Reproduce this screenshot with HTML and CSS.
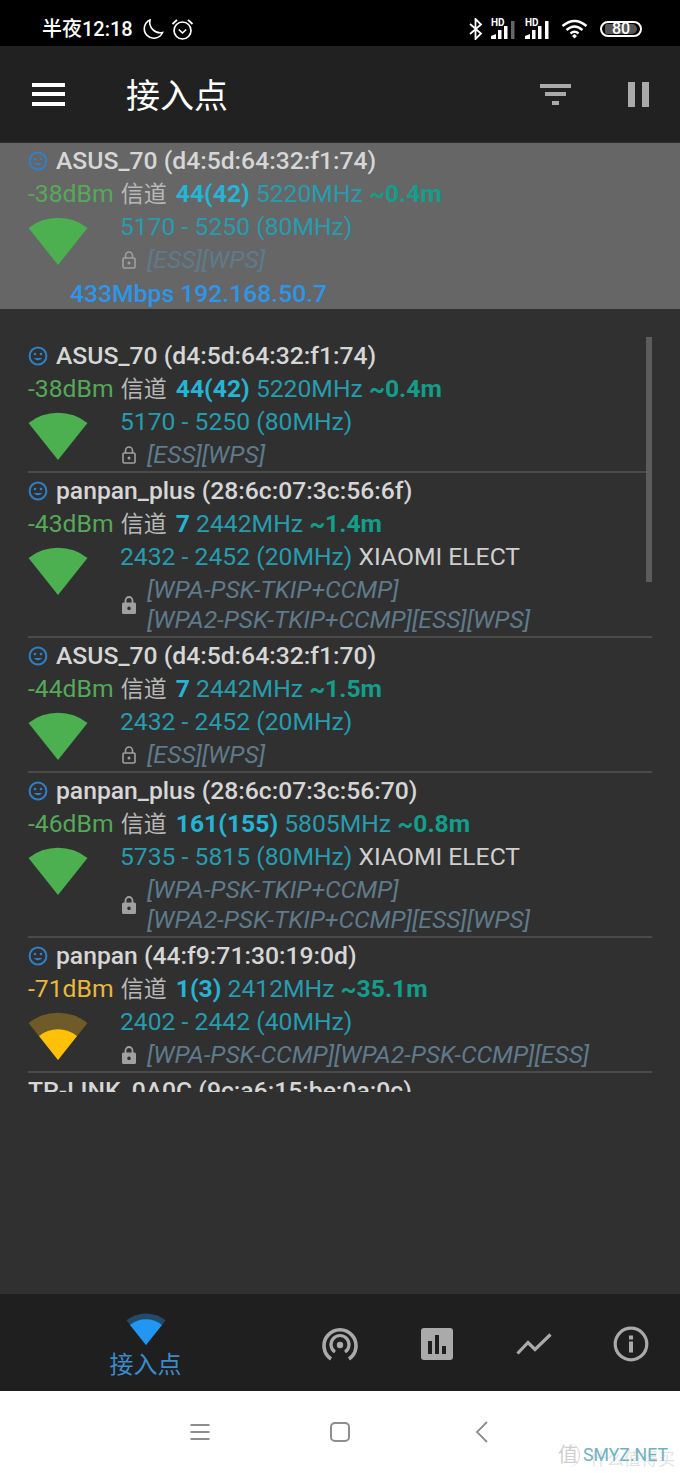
FILE: index.html
```html
<!DOCTYPE html>
<html lang="zh-CN">
<head>
    <meta charset="UTF-8">
    <meta name="viewport" content="width=device-width, initial-scale=1.0">
    <title>接入点</title>
    <link rel="stylesheet" href="styles.css">
</head>
<body>
    <!-- shared icons -->
    <svg class="defs" width="0" height="0">
        <symbol id="face" viewBox="0 0 20 20">
            <circle cx="10" cy="10" r="8.4" fill="none" stroke="currentColor" stroke-width="2"/>
            <circle cx="7" cy="8" r="1.3" fill="currentColor"/>
            <circle cx="13" cy="8" r="1.3" fill="currentColor"/>
            <path d="M5.8 12 Q10 16.4 14.2 12 Z" fill="currentColor"/>
        </symbol>
        <symbol id="wedge-full" viewBox="0 0 60 48">
            <path d="M0.5 11 A47.5 47.5 0 0 1 59.5 11 L30 48 Z" fill="#4caf50"/>
        </symbol>
        <symbol id="wedge-low" viewBox="0 0 60 48">
            <path d="M0.5 11 A47.5 47.5 0 0 1 59.5 11 L30 48 Z" fill="#6e5b27"/>
            <path d="M11 24 A30.500 30.500 0 0 1 49 24 L30 48 Z" fill="#ffc107"/>
        </symbol>
        <symbol id="lock-open" viewBox="0 0 14 18">
            <path d="M3.500 7 V4.500 a3.500 3.500 0 0 1 7 0 V7" fill="none" stroke="currentColor" stroke-width="1.600"/>
            <rect x="1" y="7" width="12" height="10" rx="1.200" fill="none" stroke="currentColor" stroke-width="1.600"/>
            <circle cx="7" cy="12" r="1.500" fill="currentColor"/>
        </symbol>
        <symbol id="lock-solid" viewBox="0 0 14 18">
            <path d="M3.500 7 V4.500 a3.500 3.500 0 0 1 7 0 V7" fill="none" stroke="currentColor" stroke-width="1.800"/>
            <path fill-rule="evenodd" d="M1.500 6.500 h11 a1.500 1.500 0 0 1 1.500 1.500 v8.500 a1.500 1.500 0 0 1 -1.500 1.500 h-11 a1.500 1.500 0 0 1 -1.500 -1.500 v-8.500 a1.500 1.500 0 0 1 1.500 -1.500 Z M7 10.500 a1.800 1.800 0 1 0 0.010 0 Z" fill="currentColor"/>
        </symbol>
    </svg>

    <div class="status-bar">
        <span class="clock">半夜12:18</span>
        <svg class="st-moon" width="22" height="22" viewBox="0 0 22 22"><path d="M8 2 A9.500 9.500 0 1 0 20.500 14.500 A10.500 10.500 0 0 1 8 2 Z" fill="none" stroke="#fff" stroke-width="1.600"/></svg>
        <svg class="st-alarm" width="23" height="23" viewBox="0 0 23 23"><circle cx="11.500" cy="12.500" r="8.500" fill="none" stroke="#fff" stroke-width="1.700"/><path d="M7.800 11.500 L11.500 15 L15.200 11.500" fill="none" stroke="#fff" stroke-width="1.600"/><path d="M1.500 6 L6 1.800 M21.500 6 L17 1.800" stroke="#fff" stroke-width="1.800"/></svg>
        <div class="status-right">
            <svg width="14" height="22" viewBox="0 0 14 22"><path d="M1 6 L12 15.500 L6.500 21 V1 L12 6.500 L1 16" fill="none" stroke="#fff" stroke-width="1.800"/></svg>
            <div class="sim">
                <span class="hd">HD</span>
                <svg width="26" height="19" viewBox="0 0 26 19"><path d="M0 19 V16 L5 14 V19 Z" fill="#fff"/><rect x="7" y="10" width="3.500" height="9" fill="#fff"/><rect x="13" y="6" width="3.500" height="13" fill="#fff"/><rect x="20" y="1" width="3.500" height="18" fill="#666"/></svg>
            </div>
            <div class="sim">
                <span class="hd">HD</span>
                <svg width="26" height="19" viewBox="0 0 26 19"><path d="M0 19 V16 L5 14 V19 Z" fill="#fff"/><rect x="7" y="10" width="3.500" height="9" fill="#fff"/><rect x="13" y="6" width="3.500" height="13" fill="#fff"/><rect x="20" y="1" width="3.500" height="18" fill="#fff"/></svg>
            </div>
            <svg class="st-wifi" width="27" height="20" viewBox="0 0 27 20"><path d="M1.500 7 Q13.500 -3 25.500 7 M5.500 11 Q13.500 4 21.500 11 M9.500 14.500 Q13.500 11 17.500 14.500" fill="none" stroke="#fff" stroke-width="2.400"/><path d="M11 17 L13.500 15 L16 17 L13.500 19.500 Z" fill="#fff"/></svg>
            <div class="battery"><span class="battery-fill">80</span></div>
        </div>
    </div>

    <header class="toolbar">
        <div class="hamburger"><i></i><i></i><i></i></div>
        <h1>接入点</h1>
        <div class="filter"><i></i><i></i><i></i></div>
        <div class="pause"><i></i><i></i></div>
    </header>

    <main class="content">
        <!-- connected network -->
        <section class="ap connected">
            <div class="ap-title"><svg class="face"><use href="#face"/></svg>ASUS_70 (d4:5d:64:32:f1:74)</div>
            <div class="ap-line"><span class="good">-38dBm</span> <span class="cn">信道</span> <b class="chan">44(42)</b> <span class="freq">5220MHz</span> <b class="dist">~0.4m</b></div>
            <div class="ap-body">
                <svg class="wedge"><use href="#wedge-full"/></svg>
                <div>
                    <div class="range">5170 - 5250 (80MHz)</div>
                    <div class="sec"><svg class="lock"><use href="#lock-open"/></svg><div class="caps">[ESS][WPS]</div></div>
                </div>
            </div>
            <div class="link">433Mbps 192.168.50.7</div>
        </section>

        <div class="scroll-thumb"></div>

        <div class="list">
            <section class="ap">
                <div class="ap-title"><svg class="face"><use href="#face"/></svg>ASUS_70 (d4:5d:64:32:f1:74)</div>
                <div class="ap-line"><span class="good">-38dBm</span> <span class="cn">信道</span> <b class="chan">44(42)</b> <span class="freq">5220MHz</span> <b class="dist">~0.4m</b></div>
                <div class="ap-body">
                    <svg class="wedge"><use href="#wedge-full"/></svg>
                    <div>
                        <div class="range">5170 - 5250 (80MHz)</div>
                        <div class="sec"><svg class="lock"><use href="#lock-open"/></svg><div class="caps">[ESS][WPS]</div></div>
                    </div>
                </div>
            </section>

            <section class="ap">
                <div class="ap-title"><svg class="face"><use href="#face"/></svg>panpan_plus (28:6c:07:3c:56:6f)</div>
                <div class="ap-line"><span class="good">-43dBm</span> <span class="cn">信道</span> <b class="chan">7</b> <span class="freq">2442MHz</span> <b class="dist">~1.4m</b></div>
                <div class="ap-body">
                    <svg class="wedge"><use href="#wedge-full"/></svg>
                    <div>
                        <div class="range">2432 - 2452 (20MHz) <span class="vendor">XIAOMI ELECT</span></div>
                        <div class="sec two"><svg class="lock"><use href="#lock-solid"/></svg><div class="caps">[WPA-PSK-TKIP+CCMP]<br>[WPA2-PSK-TKIP+CCMP][ESS][WPS]</div></div>
                    </div>
                </div>
            </section>

            <section class="ap">
                <div class="ap-title"><svg class="face"><use href="#face"/></svg>ASUS_70 (d4:5d:64:32:f1:70)</div>
                <div class="ap-line"><span class="good">-44dBm</span> <span class="cn">信道</span> <b class="chan">7</b> <span class="freq">2442MHz</span> <b class="dist">~1.5m</b></div>
                <div class="ap-body">
                    <svg class="wedge"><use href="#wedge-full"/></svg>
                    <div>
                        <div class="range">2432 - 2452 (20MHz)</div>
                        <div class="sec"><svg class="lock"><use href="#lock-open"/></svg><div class="caps">[ESS][WPS]</div></div>
                    </div>
                </div>
            </section>

            <section class="ap">
                <div class="ap-title"><svg class="face"><use href="#face"/></svg>panpan_plus (28:6c:07:3c:56:70)</div>
                <div class="ap-line"><span class="good">-46dBm</span> <span class="cn">信道</span> <b class="chan">161(155)</b> <span class="freq">5805MHz</span> <b class="dist">~0.8m</b></div>
                <div class="ap-body">
                    <svg class="wedge"><use href="#wedge-full"/></svg>
                    <div>
                        <div class="range">5735 - 5815 (80MHz) <span class="vendor">XIAOMI ELECT</span></div>
                        <div class="sec two"><svg class="lock"><use href="#lock-solid"/></svg><div class="caps">[WPA-PSK-TKIP+CCMP]<br>[WPA2-PSK-TKIP+CCMP][ESS][WPS]</div></div>
                    </div>
                </div>
            </section>

            <section class="ap">
                <div class="ap-title"><svg class="face"><use href="#face"/></svg>panpan (44:f9:71:30:19:0d)</div>
                <div class="ap-line"><span class="fair">-71dBm</span> <span class="cn">信道</span> <b class="chan">1(3)</b> <span class="freq">2412MHz</span> <b class="dist">~35.1m</b></div>
                <div class="ap-body">
                    <svg class="wedge"><use href="#wedge-low"/></svg>
                    <div>
                        <div class="range">2402 - 2442 (40MHz)</div>
                        <div class="sec"><svg class="lock"><use href="#lock-solid"/></svg><div class="caps">[WPA-PSK-CCMP][WPA2-PSK-CCMP][ESS]</div></div>
                    </div>
                </div>
            </section>

            <section class="ap">
                <div class="ap-title">TP-LINK_0A0C (9c:a6:15:be:0a:0c)</div>
            </section>
        </div>
    </main>

    <nav class="bottom-nav">
        <div class="tab active">
            <svg width="40" height="32" viewBox="0 0 60 48"><path d="M0.500 11 A47.500 47.500 0 0 1 59.500 11 L30 48 Z" fill="#24496b"/><path d="M6 18 A38 38 0 0 1 54 18 L30 48 Z" fill="#2196f3"/></svg>
            <span>接入点</span>
        </div>
        <div class="tab">
            <svg width="36" height="34" viewBox="0 0 36 34"><path d="M9 32 A16 16 0 1 1 27 32" fill="none" stroke="#aaa" stroke-width="3.600"/><path d="M13 25 A9 9 0 1 1 23 25" fill="none" stroke="#aaa" stroke-width="3.200"/><circle cx="18" cy="18" r="3.200" fill="#aaa"/></svg>
        </div>
        <div class="tab">
            <svg width="32" height="32" viewBox="0 0 32 32"><rect width="32" height="32" rx="3" fill="#aaa"/><rect x="7" y="13" width="4" height="13" fill="#1f1f1f"/><rect x="14" y="7" width="4" height="19" fill="#1f1f1f"/><rect x="21" y="18" width="4" height="8" fill="#1f1f1f"/></svg>
        </div>
        <div class="tab">
            <svg width="36" height="22" viewBox="0 0 36 22"><path d="M1.500 20.500 L12 9.500 L19 16.500 L34.500 1.500" fill="none" stroke="#aaa" stroke-width="3.200"/></svg>
        </div>
        <div class="tab">
            <svg width="36" height="36" viewBox="0 0 36 36"><circle cx="18" cy="18" r="15.800" fill="none" stroke="#aaa" stroke-width="3.200"/><rect x="16" y="15.500" width="4" height="11" fill="#aaa"/><rect x="16" y="9.500" width="4" height="4" fill="#aaa"/></svg>
        </div>
    </nav>

    <div class="sys-nav">
        <svg width="20" height="20" viewBox="0 0 20 20"><path d="M0.500 3 H19.500 M0.500 10 H19.500 M0.500 17 H19.500" stroke="#8e8e8e" stroke-width="1.800"/></svg>
        <svg width="20" height="20" viewBox="0 0 20 20"><rect x="1" y="1" width="18" height="18" rx="4" fill="none" stroke="#8e8e8e" stroke-width="2"/></svg>
        <svg width="20" height="22" viewBox="0 0 20 22"><path d="M17 1 L7 11 L17 21" fill="none" stroke="#8e8e8e" stroke-width="1.800"/></svg>
        <div class="watermark-cn">什么值得买</div>
        <div class="watermark"><span class="wm-mark">值</span><span class="wm-name">SMYZ.NET</span></div>
    </div>
</body>
</html>
```
FILE: styles.css
```css
* {
  box-sizing: border-box;
}

html, body {
  height: 100%;
  margin: 0;
}

body {
  display: flex;
  flex-direction: column;
  background-color: #303030;
  font-family: Roboto, "Noto Sans CJK SC", sans-serif;
  font-size: 24.7px;
  overflow: hidden;
}

.defs {
  position: absolute;
}

/* Status bar */
.status-bar {
  height: 46px;
  flex: none;
  background-color: #000;
  color: #fff;
  display: flex;
  align-items: center;
  padding: 16px 38px 4px 42px;
}

.clock {
  font-size: 20px;
  font-weight: 500;
  line-height: 26px;
}

.st-moon {
  margin-left: 9px;
}

.st-alarm {
  margin-left: 7px;
}

.status-right {
  margin-left: auto;
  display: flex;
  align-items: center;
  gap: 8px;
}

.sim {
  position: relative;
  width: 26px;
  height: 20px;
  display: flex;
  align-items: flex-end;
}

.hd {
  position: absolute;
  left: 0;
  top: -2px;
  font-size: 10px;
  font-weight: 700;
  line-height: 12px;
}

.st-wifi {
  margin: 0 2px;
}

.battery {
  width: 42px;
  height: 16px;
  border: 2px solid #fff;
  border-radius: 8px;
  padding: 1px;
  margin-left: 2px;
  display: flex;
}

.battery-fill {
  width: 32px;
  margin-left: 2px;
  background-color: #555;
  border-radius: 2px 5px 5px 2px;
  color: #fff;
  font-size: 16px;
  font-weight: 500;
  line-height: 10px;
  text-align: center;
}

/* Toolbar */
.toolbar {
  height: 97px;
  flex: none;
  background-color: #212121;
  border-bottom: 1px solid #2c2c2c;
  display: flex;
  align-items: center;
  padding: 0 31px 0 32px;
  color: #fff;
}

.toolbar h1 {
  margin: 3px 0 0 61px;
  font-size: 34px;
  font-weight: 400;
  line-height: 44px;
}

.hamburger {
  width: 33px;
  height: 23px;
  display: flex;
  flex-direction: column;
  justify-content: space-between;
}

.hamburger i {
  display: block;
  height: 4px;
  background-color: #fff;
}

.filter {
  margin-left: auto;
  width: 31px;
  height: 21px;
  display: flex;
  flex-direction: column;
  align-items: center;
  justify-content: space-between;
}

.filter i {
  display: block;
  height: 4px;
  background-color: #aaa;
}

.filter i:nth-child(1) {
  width: 31px;
}

.filter i:nth-child(2) {
  width: 21px;
}

.filter i:nth-child(3) {
  width: 7px;
}

.pause {
  margin-left: 57px;
  width: 21px;
  height: 25px;
  display: flex;
  justify-content: space-between;
}

.pause i {
  display: block;
  width: 7px;
  background-color: #aaa;
}

/* Access point list */
.content {
  position: relative;
  flex: 1;
  min-height: 0;
}

.list {
  margin-top: 29px;
  height: 754px;
  overflow: hidden;
}

.scroll-thumb {
  position: absolute;
  right: 28px;
  top: 194px;
  width: 6px;
  height: 245px;
  background-color: #5c5c5c;
}

.ap {
  margin: 0 28px;
  padding-top: 1px;
  border-bottom: 2px solid #4a4a4a;
  line-height: 33px;
  white-space: nowrap;
}

.ap.connected {
  margin: 0;
  padding: 1px 28px 0;
  height: 166px;
  border-bottom: none;
  background-color: #666;
}

.ap-title {
  height: 33px;
  display: flex;
  align-items: center;
  font-weight: 500;
  color: #d6d6d6;
}

.face {
  width: 20px;
  height: 20px;
  margin-right: 8px;
  color: #2f80c8;
}

.ap-line {
  height: 33px;
  color: #bdbdbd;
}

.good {
  color: #55a958;
}

.fair {
  color: #eab83c;
}

.cn {
  color: #b8b8b8;
  font-size: 23px;
  margin: 0 3px 0 1px;
}

.chan {
  color: #26b4d4;
  font-weight: 700;
}

.freq,
.range {
  color: #269cae;
}

.dist {
  color: #129e8a;
  font-weight: 700;
}

.ap-body {
  display: flex;
}

.wedge {
  flex: none;
  width: 60px;
  height: 48px;
  margin: 7px 32px 0 0;
}

.range {
  height: 33px;
}

.vendor {
  color: #cfcfcf;
}

.sec {
  display: flex;
  align-items: center;
  height: 33px;
  color: #5f7b8b;
}

.sec.two {
  height: 63px;
}

.lock {
  flex: none;
  width: 14px;
  height: 18px;
  margin: 0 11px 0 2px;
  color: #a0a0a0;
}

.caps {
  font-style: italic;
  line-height: 30px;
}

.link {
  margin: 1px 0 0 42px;
  font-weight: 500;
  color: #2d95ea;
}

/* Bottom tabs */
.bottom-nav {
  height: 97px;
  flex: none;
  background-color: #1f1f1f;
  display: grid;
  grid-template-columns: 291px repeat(4, 97px);
}

.tab {
  display: flex;
  flex-direction: column;
  align-items: center;
  justify-content: center;
  padding-top: 2px;
}

.tab.active {
  padding-top: 19px;
  justify-content: flex-start;
  color: #3a8ccc;
  font-size: 24px;
  line-height: 30px;
}

.tab.active span {
  margin-top: 5px;
}

/* System nav */
.sys-nav {
  position: relative;
  height: 82px;
  flex: none;
  background-color: #fff;
  display: flex;
  align-items: center;
  gap: 120px;
  padding: 0 0 0 190px;
}

.watermark-cn {
  position: absolute;
  left: 590px;
  bottom: 2px;
  color: #e4e4e4;
  font-size: 17px;
  line-height: 24px;
}

.watermark {
  position: absolute;
  left: 558px;
  bottom: 6px;
  display: flex;
  align-items: center;
  gap: 3px;
  line-height: 24px;
}

.wm-mark {
  width: 22px;
  height: 24px;
  border-right: 1px solid #d8d8d8;
  border-radius: 50%;
  color: #cfcfcf;
  font-size: 20px;
}

.wm-name {
  color: #6fb3c0;
  font-size: 17.7px;
}
```
